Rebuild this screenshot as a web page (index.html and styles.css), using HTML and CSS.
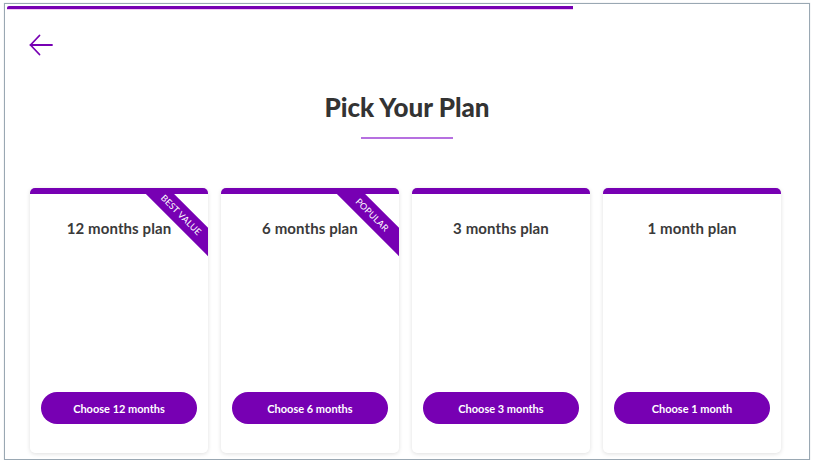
FILE: index.html
```html
<!DOCTYPE html>
<html lang="en">
<head>
    <meta charset="UTF-8">
    <meta name="viewport" content="width=device-width, initial-scale=1.0">
    <title>Pick Your Plan</title>
    <link rel="stylesheet" href="styles.css">
</head>
<body>
    <div class="frame">
        <div class="progress"><div class="progress-fill"></div></div>

        <a href="#" class="back-btn" aria-label="Back">
            <svg width="24" height="24" viewBox="0 0 24 24" fill="none" stroke="currentColor" stroke-width="1.8" stroke-linecap="round" stroke-linejoin="round">
                <path d="M23 12H1.5"/>
                <path d="M10.5 2.5L1.5 12l9 9.5"/>
            </svg>
        </a>

        <h1 class="page-title">Pick Your Plan</h1>
        <div class="divider"></div>

        <div class="plans">
            <div class="plan-card">
                <div class="ribbon">Best Value</div>
                <h3 class="plan-title">12 months plan</h3>
                <button class="choose-btn">Choose 12 months</button>
            </div>
            <div class="plan-card">
                <div class="ribbon">Popular</div>
                <h3 class="plan-title">6 months plan</h3>
                <button class="choose-btn">Choose 6 months</button>
            </div>
            <div class="plan-card">
                <h3 class="plan-title">3 months plan</h3>
                <button class="choose-btn">Choose 3 months</button>
            </div>
            <div class="plan-card">
                <h3 class="plan-title">1 month plan</h3>
                <button class="choose-btn">Choose 1 month</button>
            </div>
        </div>
    </div>
</body>
</html>
```

FILE: styles.css
```css
:root {
    --purple: #7700b3;
    --purple-light: #b670e0;
    --text: #333;
}

* {
    box-sizing: border-box;
    margin: 0;
    padding: 0;
}

body {
    background: #fff;
    font-family: Lato, 'Open Sans', sans-serif;
    color: var(--text);
}

.frame {
    margin: 3px 4px 0 4px;
    width: 806px;
    height: 457px;
    border: 1px solid #9aa8b3;
    box-shadow: 0 0 1px rgba(80,100,120,0.3);
    background: white;
    overflow: hidden;
}

.progress {
    margin: 2px 0 0 2px;
    height: 4px;
}

.progress-fill {
    width: 566px;
    height: 3px;
    background: var(--purple);
    border-radius: 2px 0 0 0;
    box-shadow: 0 1px 0 #f3c6f3;
}

.back-btn {
    display: block;
    width: 24px;
    height: 24px;
    margin: 23px 0 0 24px;
    color: var(--purple);
}

.back-btn svg {
    display: block;
}

.page-title {
    margin-top: 35px;
    text-align: center;
    font-size: 26px;
    line-height: 30px;
    font-weight: 900;
    color: #333;
}

.divider {
    width: 92px;
    height: 2px;
    margin: 15px auto 0;
    background: var(--purple-light);
}

.plans {
    display: grid;
    grid-template-columns: repeat(4, 178px);
    gap: 13px;
    margin: 49px 0 0 25px;
}

.plan-card {
    position: relative;
    height: 265px;
    background: white;
    border-top: 6px solid var(--purple);
    border-radius: 5px;
    box-shadow: 0 1px 4px rgba(0,0,0,0.13);
    display: flex;
    flex-direction: column;
    align-items: center;
    padding: 24px 11px 29px;
    overflow: hidden;
}

.plan-title {
    font-size: 15px;
    line-height: 20px;
    font-weight: 700;
    color: #3a3a3a;
    letter-spacing: 0.1px;
}

.ribbon {
    position: absolute;
    top: 11px;
    right: -23px;
    width: 100px;
    height: 20px;
    line-height: 20px;
    background: var(--purple);
    color: white;
    font-size: 9px;
    text-transform: uppercase;
    text-align: center;
    letter-spacing: 0.2px;
    transform: rotate(45deg);
}

.choose-btn {
    margin-top: auto;
    width: 156px;
    height: 32px;
    border: none;
    border-radius: 16px;
    background: var(--purple);
    color: white;
    font-family: Lato, sans-serif;
    font-size: 11px;
    font-weight: 700;
    cursor: pointer;
}
```
